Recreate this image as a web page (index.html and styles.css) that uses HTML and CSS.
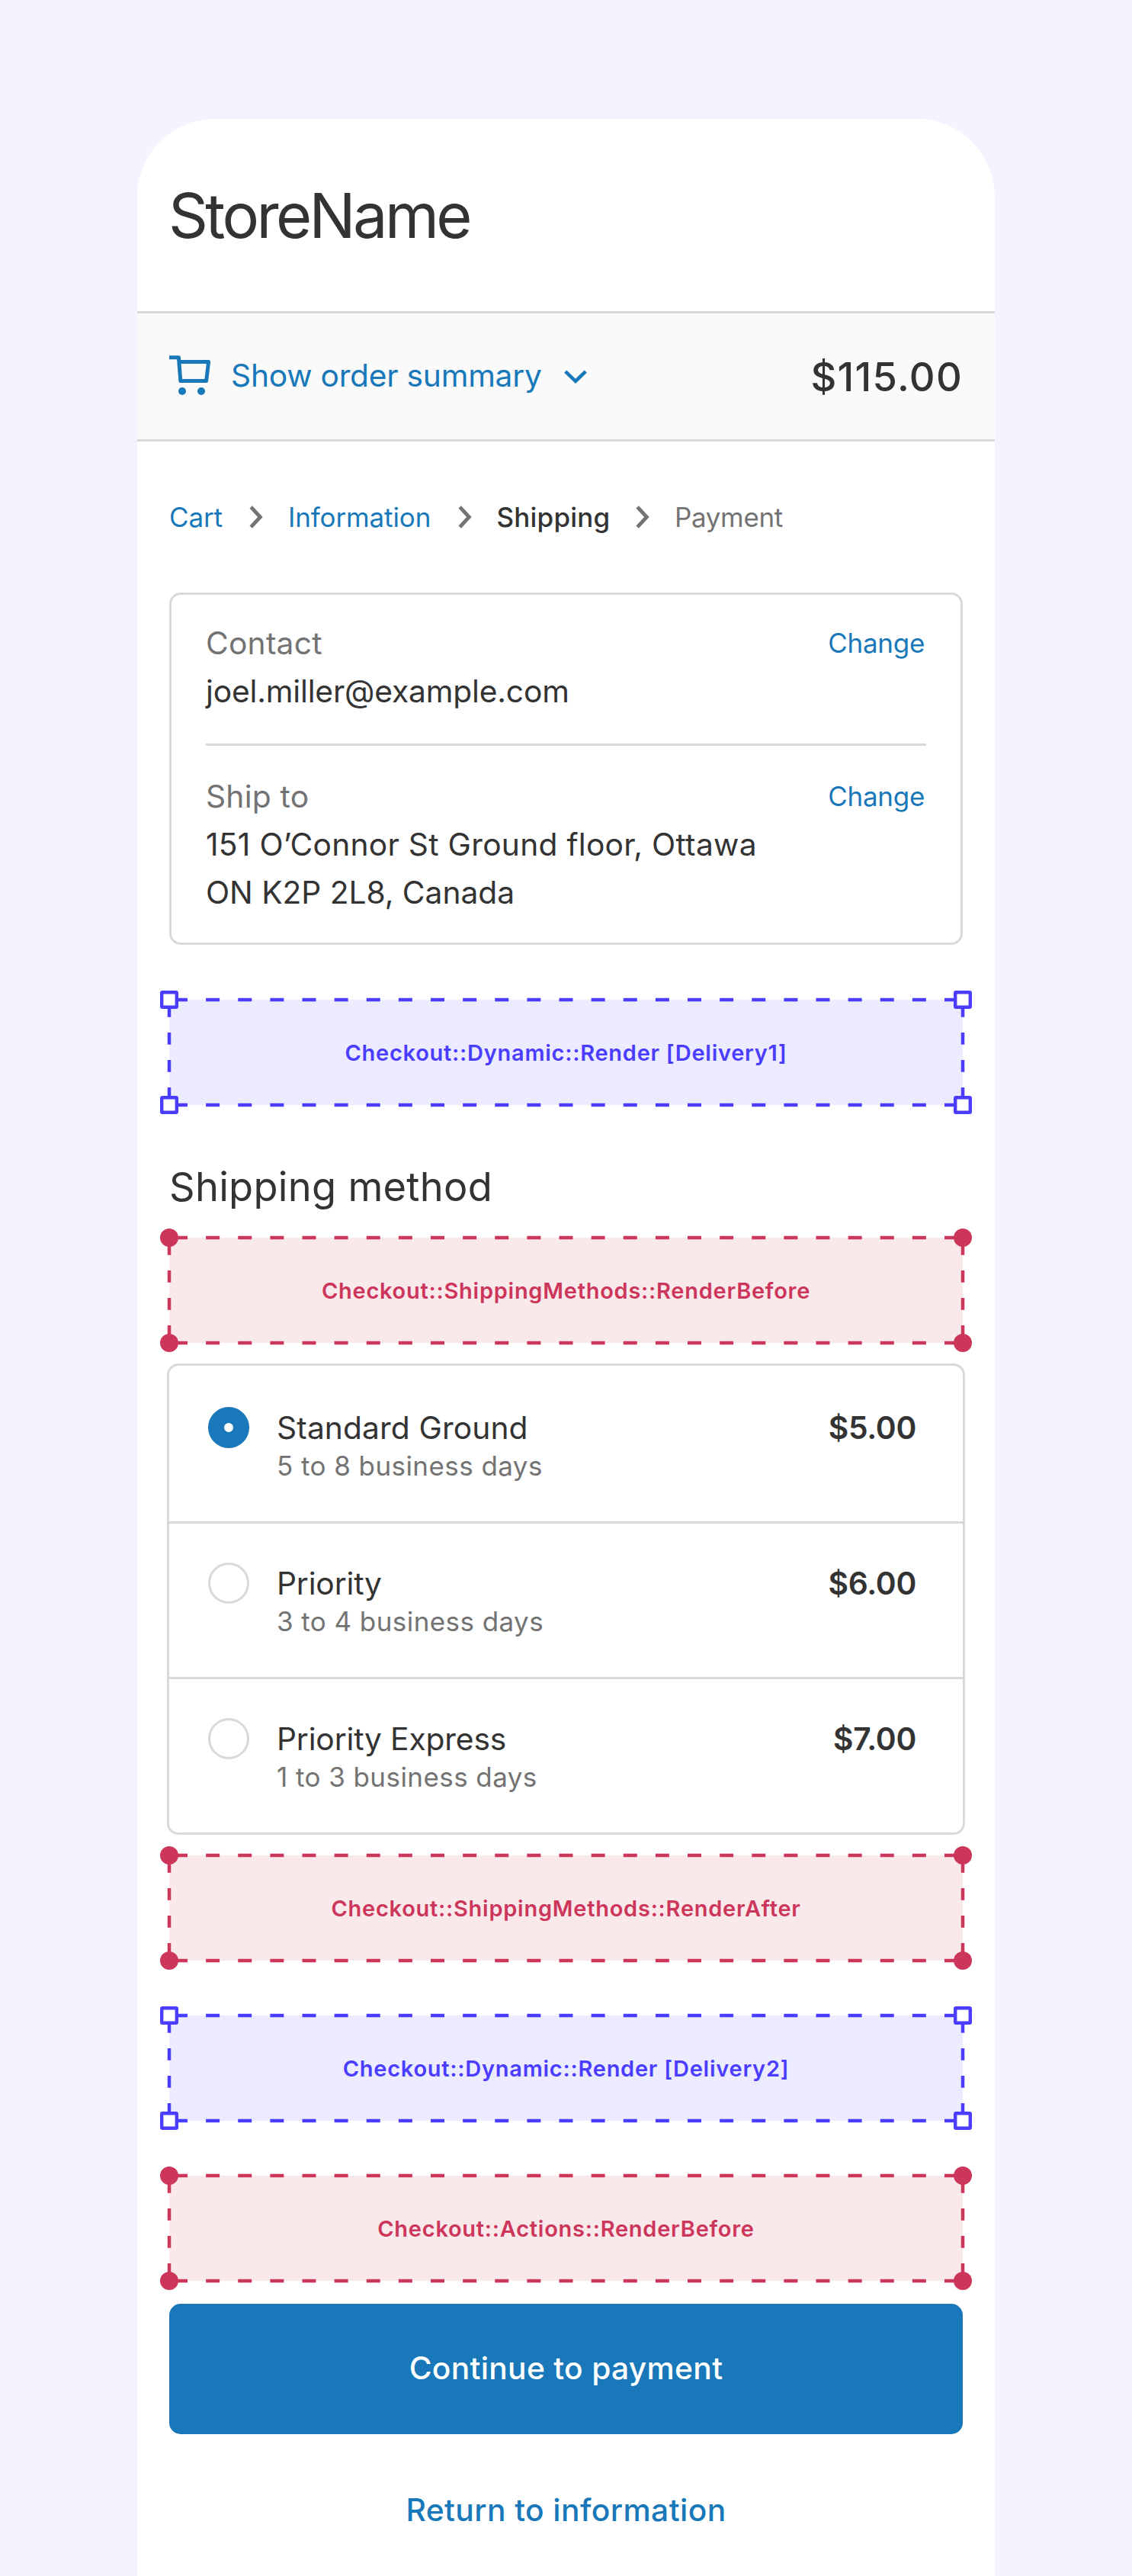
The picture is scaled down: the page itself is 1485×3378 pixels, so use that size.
FILE: index.html
```html
<!DOCTYPE html>
<html lang="en">
<head>
<meta charset="utf-8">
<title>StoreName checkout – Shipping</title>
<link rel="stylesheet" href="styles.css">
</head>
<body>
<svg class="defs" width="0" height="0" aria-hidden="true">
  <symbol id="dashes" viewBox="0 0 1065 162">
    <g fill="none" stroke="currentColor" stroke-width="4.5">
      <path d="M18 12H1047M18 150H1047" stroke-dasharray="18 24.125"/>
      <path d="M12 19.1V142.9M1053 19.1V142.9" stroke-dasharray="15.75 20.25"/>
    </g>
  </symbol>
  <symbol id="frame-dynamic" viewBox="0 0 1065 162">
    <use href="#dashes" width="1065" height="162"/>
    <g fill="#fff" stroke="currentColor" stroke-width="4.4">
      <rect x="2.2" y="2.2" width="19.6" height="19.6" rx="1"/>
      <rect x="1043.2" y="2.2" width="19.6" height="19.6" rx="1"/>
      <rect x="2.2" y="140.2" width="19.6" height="19.6" rx="1"/>
      <rect x="1043.2" y="140.2" width="19.6" height="19.6" rx="1"/>
    </g>
  </symbol>
  <symbol id="frame-static" viewBox="0 0 1065 162">
    <use href="#dashes" width="1065" height="162"/>
    <g fill="currentColor">
      <circle cx="12" cy="12" r="12"/>
      <circle cx="1053" cy="12" r="12"/>
      <circle cx="12" cy="150" r="12"/>
      <circle cx="1053" cy="150" r="12"/>
    </g>
  </symbol>
  <symbol id="chevron-right" viewBox="0 0 18 30">
    <path d="M2.2 1.8L14.4 15L2.2 28.2" fill="none" stroke="currentColor" stroke-width="4.8"/>
  </symbol>
</svg>

<main class="phone">
  <header class="store-header"><h1 class="store-name">StoreName</h1></header>

  <section class="summary">
    <a class="summary-toggle">
      <svg class="icon-cart" viewBox="0 0 54 50" aria-hidden="true">
        <path d="M0 4.7H12.4L14.8 35.5H48.6L51.6 10.5H13" fill="none" stroke="currentColor" stroke-width="5" stroke-linejoin="round"/>
        <circle cx="17" cy="49" r="5" fill="currentColor"/>
        <circle cx="42" cy="49" r="5" fill="currentColor"/>
      </svg>
      <span class="summary-label">Show order summary</span>
      <svg class="icon-down" viewBox="0 0 30 18" aria-hidden="true">
        <path d="M1.7 2.1L15 14.8L28.3 2.1" fill="none" stroke="currentColor" stroke-width="4.6"/>
      </svg>
    </a>
    <span class="summary-total">$115.00</span>
  </section>

  <div class="content">
    <nav class="breadcrumb">
      <a class="crumb crumb-cart">Cart</a>
      <svg class="icon-next"><use href="#chevron-right"/></svg>
      <a class="crumb crumb-info">Information</a>
      <svg class="icon-next"><use href="#chevron-right"/></svg>
      <span class="crumb crumb-current">Shipping</span>
      <svg class="icon-next"><use href="#chevron-right"/></svg>
      <span class="crumb crumb-next">Payment</span>
    </nav>

    <section class="review">
      <div class="review-row">
        <div>
          <div class="review-label">Contact</div>
          <div class="review-value">joel.miller@example.com</div>
        </div>
        <a class="change">Change</a>
      </div>
      <div class="review-row">
        <div>
          <div class="review-label">Ship to</div>
          <div class="review-value address"><span class="street">151 O’Connor St Ground floor, Ottawa</span><br>ON K2P 2L8, Canada</div>
        </div>
        <a class="change">Change</a>
      </div>
    </section>

    <div class="slot slot-dynamic slot-spaced">
      <svg class="frame"><use href="#frame-dynamic"/></svg>
      <span>Checkout::Dynamic::Render [Delivery1]</span>
    </div>

    <h2 class="section-title">Shipping method</h2>

    <div class="slot slot-static">
      <svg class="frame"><use href="#frame-static"/></svg>
      <span>Checkout::ShippingMethods::RenderBefore</span>
    </div>

    <section class="methods">
      <label class="method">
        <span class="radio radio-on"></span>
        <span class="method-text"><span class="method-name">Standard Ground</span><span class="method-time">5 to 8 business days</span></span>
        <span class="price">$5.00</span>
      </label>
      <label class="method">
        <span class="radio"></span>
        <span class="method-text"><span class="method-name tight">Priority</span><span class="method-time">3 to 4 business days</span></span>
        <span class="price">$6.00</span>
      </label>
      <label class="method">
        <span class="radio"></span>
        <span class="method-text"><span class="method-name tight">Priority Express</span><span class="method-time">1 to 3 business days</span></span>
        <span class="price">$7.00</span>
      </label>
    </section>

    <div class="slot slot-static">
      <svg class="frame"><use href="#frame-static"/></svg>
      <span>Checkout::ShippingMethods::RenderAfter</span>
    </div>

    <div class="slot slot-dynamic slot-spaced">
      <svg class="frame"><use href="#frame-dynamic"/></svg>
      <span>Checkout::Dynamic::Render [Delivery2]</span>
    </div>

    <div class="slot slot-static slot-spaced">
      <svg class="frame"><use href="#frame-static"/></svg>
      <span>Checkout::Actions::RenderBefore</span>
    </div>

    <a class="continue">Continue to payment</a>
    <a class="return">Return to information</a>
  </div>
</main>
</body>
</html>
```
FILE: styles.css
```css
* { box-sizing: border-box; }

body {
  margin: 0;
  padding-top: 156px;
  background: #f5f3ff;
  color: #333;
  font-family: Inter, "Liberation Sans", sans-serif;
  font-size: 40.75px;
}

.defs { position: absolute; }

.phone {
  width: 1125px;
  height: 3222px;
  margin-left: 180px;
  overflow: hidden;
  background: #fff;
  border-radius: 102px 102px 0 0;
}

.store-header {
  display: flex;
  align-items: center;
  height: 252px;
  padding: 2px 41px 0;
}

.store-name {
  margin: 0;
  font-size: 81px;
  font-weight: 400;
  letter-spacing: -3.6px;
}

.summary {
  display: flex;
  align-items: center;
  justify-content: space-between;
  height: 171px;
  padding: 0 42px;
  background: #fafafa;
  border-top: 3px solid #d9d9d9;
  border-bottom: 3px solid #d9d9d9;
}

.summary-toggle {
  display: flex;
  align-items: center;
  color: #1878b9;
}

.icon-cart {
  width: 54px;
  height: 50px;
  overflow: visible;
  margin-bottom: 9px;
}

.summary-label {
  margin: 0 29px 2px 27px;
  letter-spacing: -0.25px;
}

.icon-down {
  width: 30px;
  height: 18px;
}

.summary-total {
  font-size: 52.4px;
  font-weight: 500;
  letter-spacing: 1.3px;
}

.content { padding: 0 42px; }

.breadcrumb {
  display: flex;
  align-items: center;
  height: 198px;
  font-size: 35px;
}

.crumb {
  padding-bottom: 1px;
  letter-spacing: -0.13px;
  color: #1878b9;
}

.crumb-cart { width: 70px; }
.crumb-info { width: 187.5px; }
.crumb-current { width: 147.5px; color: #333; font-weight: 500; letter-spacing: 0.2px; }
.crumb-next { color: #737373; letter-spacing: -0.35px; }

.icon-next {
  width: 18px;
  height: 30px;
  margin: 0 33px 0 35px;
  color: #737373;
}

.review {
  height: 462px;
  padding: 0 45px;
  border: 3px solid #d9d9d9;
  border-radius: 15px;
  line-height: 63px;
}

.review-row {
  display: flex;
  justify-content: space-between;
  padding: 32px 0 37px;
}

.review-row + .review-row {
  padding: 35px 0 0;
  border-top: 3px solid #d9d9d9;
}

.review-label { color: #737373; letter-spacing: 0.2px; }
.review-value { letter-spacing: -0.18px; }
.address { letter-spacing: -0.05px; }
.street { letter-spacing: 0.26px; }

.change {
  margin-right: 2px;
  font-size: 35px;
  letter-spacing: -0.3px;
  color: #1878b9;
}

.slot {
  position: relative;
  display: flex;
  align-items: center;
  justify-content: center;
  height: 138px;
  padding-top: 1px;
  font-size: 29px;
  font-weight: 600;
  letter-spacing: 0.74px;
}

.slot-spaced { margin-top: 72px; }
.slot-dynamic { background: #edebff; color: #4b3dff; }
.slot-static { background: #fae9eb; color: #cd365b; }

/* dashed outline and handles straddle the slot's edge */
.frame {
  position: absolute;
  left: -12px;
  top: -12px;
  width: 1065px;
  height: 162px;
}

.section-title {
  height: 174px;
  margin: 0;
  padding-top: 40px;
  font-size: 52.4px;
  font-weight: 400;
  line-height: 134px;
  letter-spacing: 0.27px;
}

.methods {
  height: 618px;
  margin: 27px -3px;
  border: 3px solid #d9d9d9;
  border-radius: 15px;
}

.method {
  display: flex;
  height: 204px;
  padding: 54px 61px 0 51px;
}

.method + .method {
  padding-top: 51px;
  border-top: 3px solid #d9d9d9;
}

.radio {
  width: 54px;
  height: 54px;
  border: 3px solid #d9d9d9;
  border-radius: 50%;
}

.radio-on {
  border: 21px solid #1878b9;
}

.method-text {
  display: flex;
  flex: 1;
  flex-direction: column;
  margin-left: 36px;
}

.method-name {
  line-height: 55px;
  letter-spacing: 0.1px;
}

.tight { letter-spacing: -0.17px; }

.method-time {
  font-size: 35px;
  line-height: 45px;
  letter-spacing: 0.43px;
  color: #737373;
}

.price {
  font-weight: 600;
  line-height: 55px;
  letter-spacing: -0.3px;
}

.continue,
.return {
  display: block;
  text-align: center;
  font-weight: 500;
}

.continue {
  height: 171px;
  margin-top: 30px;
  border-radius: 15px;
  background: #1878b9;
  color: #fff;
  line-height: 170px;
  letter-spacing: 0.3px;
}

.return {
  height: 186px;
  padding-top: 12px;
  line-height: 175px;
  letter-spacing: 0.42px;
  color: #1878b9;
}
```
